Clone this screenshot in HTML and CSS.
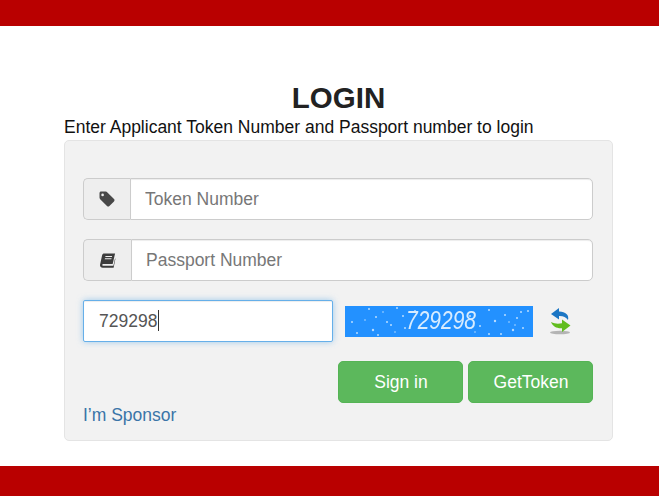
FILE: index.html
```html
<!DOCTYPE html>
<html lang="en">
<head>
    <meta charset="UTF-8">
    <meta name="viewport" content="width=device-width, initial-scale=1.0">
    <title>Login</title>
    <link rel="stylesheet" href="styles.css">
</head>
<body>
    <div class="top-bar"></div>

    <div class="content">
        <h1>LOGIN</h1>
        <p class="intro">Enter Applicant Token Number and Passport number to login</p>

        <form class="panel">
            <div class="input-group">
                <span class="addon">
                    <svg class="icon-tag" viewBox="0 0 16 16" width="16" height="16">
                        <path d="M0.5 2.2C0.5 1.2 1.2 0.6 2.2 0.6H6.6C7.3 0.6 7.9 0.9 8.4 1.4L15 8C15.7 8.7 15.7 9.7 15 10.4L10.4 15C9.7 15.7 8.7 15.7 8 15L1.4 8.4C0.8 7.8 0.5 7.2 0.5 6.5ZM3.6 2.6A1.3 1.3 0 1 0 3.6 5.2A1.3 1.3 0 1 0 3.6 2.6Z" fill="#484848" fill-rule="evenodd"/>
                    </svg>
                </span>
                <input class="field" type="text" placeholder="Token Number">
            </div>

            <div class="input-group">
                <span class="addon addon-wide">
                    <svg class="icon-book" viewBox="0 0 17 16" width="17" height="15">
                        <path d="M5 0.4H16.6L14 11.8H4.2C3.2 11.8 2.8 12.4 3 13C3.2 13.5 3.6 13.7 4.2 13.7H14.8L16.6 5.6L16.9 6.4L15 15.6H3.4C1.4 15.6 0.2 14.2 0.6 12.2L2.8 2.2C3 1.1 3.9 0.4 5 0.4ZM6.4 3.2L6.1 4.3H13.2L13.5 3.2ZM5.8 5.6L5.5 6.7H12.6L12.9 5.6Z" fill="#3c3c3c" fill-rule="evenodd"/>
                    </svg>
                </span>
                <input class="field" type="text" placeholder="Passport Number">
            </div>

            <div class="captcha-row">
                <div class="captcha-input">
                    <input class="field field-focus" type="text" value="729298">
                    <span class="caret"></span>
                </div>
                <div class="captcha-image">
                    <svg class="captcha-dots" width="188" height="31">
                        <g fill="#b9dcff">
                            <circle cx="24" cy="3" r="1"/><circle cx="31" cy="11" r="1"/><circle cx="7" cy="16" r="1"/>
                            <circle cx="28" cy="24" r="1.2"/><circle cx="42" cy="16" r="1"/><circle cx="46" cy="19" r="1"/>
                            <circle cx="52" cy="2" r="1"/><circle cx="58" cy="10" r="1"/><circle cx="33" cy="29" r="1"/>
                            <circle cx="60" cy="22" r="1"/><circle cx="70" cy="5" r="1"/><circle cx="12" cy="27" r="1"/>
                            <circle cx="20" cy="14" r="0.8"/><circle cx="38" cy="6" r="0.8"/><circle cx="50" cy="26" r="0.8"/>
                            <circle cx="144" cy="4" r="1"/><circle cx="150" cy="15" r="1.2"/><circle cx="160" cy="9" r="1"/>
                            <circle cx="172" cy="12" r="1"/><circle cx="178" cy="22" r="1"/><circle cx="183" cy="5" r="1"/>
                            <circle cx="135" cy="20" r="1"/><circle cx="144" cy="28" r="1"/><circle cx="168" cy="24" r="1.2"/>
                            <circle cx="156" cy="28" r="1"/><circle cx="125" cy="10" r="1"/><circle cx="176" cy="6" r="1"/>
                            <circle cx="164" cy="16" r="0.8"/><circle cx="170" cy="19" r="0.8"/><circle cx="130" cy="26" r="0.8"/>
                        </g>
                    </svg>
                    <span class="captcha-text">729298</span>
                </div>
                <a class="refresh" href="#">
                    <svg viewBox="0 0 24 28" width="24" height="28">
                        <ellipse cx="12" cy="25.5" rx="10" ry="1.8" fill="#8a8a8a" opacity="0.6"/>
                        <path d="M11 1L3 7L11 12.5V9C15 8.8 18 10 20 13C21.5 8 17 4.4 11 4.6Z" fill="#1c76c4"/>
                        <path d="M14 12.5L22.5 18.5L14 25V21.2C9 21.6 4.8 19.6 3 15C7 17 10.5 17 14 16.2Z" fill="#62bd1e"/>
                    </svg>
                </a>
            </div>

            <div class="actions">
                <button class="btn" type="button">Sign in</button>
                <button class="btn" type="button">GetToken</button>
            </div>

            <a class="sponsor" href="#">I’m Sponsor</a>
        </form>
    </div>

    <div class="bottom-bar"></div>
</body>
</html>
```

FILE: styles.css
```css
* {
    box-sizing: border-box;
}

html, body {
    height: 100%;
}

body {
    margin: 0;
    display: flex;
    flex-direction: column;
    overflow: hidden;
    background-color: #fff;
    color: #333;
    font-family: "Liberation Sans", Arial, sans-serif;
    font-size: 17.5px;
}

.top-bar {
    height: 26px;
    flex: none;
    background-color: #b90000;
}

.bottom-bar {
    height: 30px;
    flex: none;
    background-color: #b90000;
}

.content {
    flex: 1;
    width: 549px;
    margin-left: 64px;
    padding-top: 54px;
}

h1 {
    margin: 0;
    height: 35px;
    color: #222;
    font-size: 29.5px;
    line-height: 35px;
    font-weight: bold;
    text-align: center;
}

.intro {
    margin: 0;
    height: 25px;
    color: #111;
    font-size: 17.5px;
    line-height: 24px;
    white-space: nowrap;
}

.panel {
    height: 301px;
    padding: 37px 19px 0 18px;
    background-color: #f2f2f2;
    border: 1px solid #e4e4e4;
    border-radius: 5px;
}

.input-group {
    display: flex;
    height: 42px;
    margin-bottom: 19px;
}

.addon {
    display: flex;
    flex: none;
    width: 47px;
    align-items: center;
    justify-content: center;
    background-color: #eee;
    border: 1px solid #ccc;
    border-right: 0;
    border-radius: 5px 0 0 5px;
}

.addon-wide {
    width: 48px;
}

.field {
    flex: 1;
    min-width: 0;
    height: 42px;
    padding: 0 14px;
    background-color: #fff;
    border: 1px solid #ccc;
    border-radius: 0 5px 5px 0;
    color: #555;
    font-family: inherit;
    font-size: 17.5px;
    box-shadow: inset 0 1px 1px rgba(0, 0, 0, 0.075);
    outline: none;
}

.field::placeholder {
    color: #777;
    opacity: 1;
}

.captcha-row {
    display: flex;
    align-items: center;
    height: 42px;
}

.captcha-input {
    position: relative;
    display: flex;
    width: 250px;
    flex: none;
}

.field-focus {
    width: 100%;
    padding: 0 15px;
    border-color: #66afe9;
    border-radius: 2px;
    box-shadow: inset 0 1px 1px rgba(0, 0, 0, 0.075), 0 0 6px rgba(102, 175, 233, 0.6);
}

.caret {
    position: absolute;
    left: 75px;
    top: 10px;
    width: 1px;
    height: 21px;
    background-color: #333;
}

.captcha-image {
    position: relative;
    display: flex;
    flex: none;
    width: 188px;
    height: 31px;
    margin-left: 12px;
    padding-left: 4px;
    align-items: center;
    justify-content: center;
    background-color: #2391ff;
}

.captcha-dots {
    position: absolute;
    top: 0;
    left: 0;
}

.captcha-text {
    position: relative;
    color: #d8ecff;
    font-family: "Liberation Sans", sans-serif;
    font-size: 21px;
    font-style: italic;
    transform: scaleY(1.2);
}

.refresh {
    display: flex;
    margin-left: 15px;
}

.refresh svg {
    filter: blur(0.5px);
}

.actions {
    display: flex;
    justify-content: flex-end;
    gap: 5px;
    margin-top: 19px;
}

.btn {
    width: 125px;
    height: 42px;
    padding: 0 0 0 1px;
    background-color: #5cb85c;
    border: 1px solid #55b455;
    border-radius: 5px;
    color: #fff;
    font-family: inherit;
    font-size: 17.5px;
    cursor: pointer;
}

.sponsor {
    display: block;
    margin-top: 0;
    color: #3a75a8;
    font-size: 17.5px;
    line-height: 24px;
    text-decoration: none;
}
```
